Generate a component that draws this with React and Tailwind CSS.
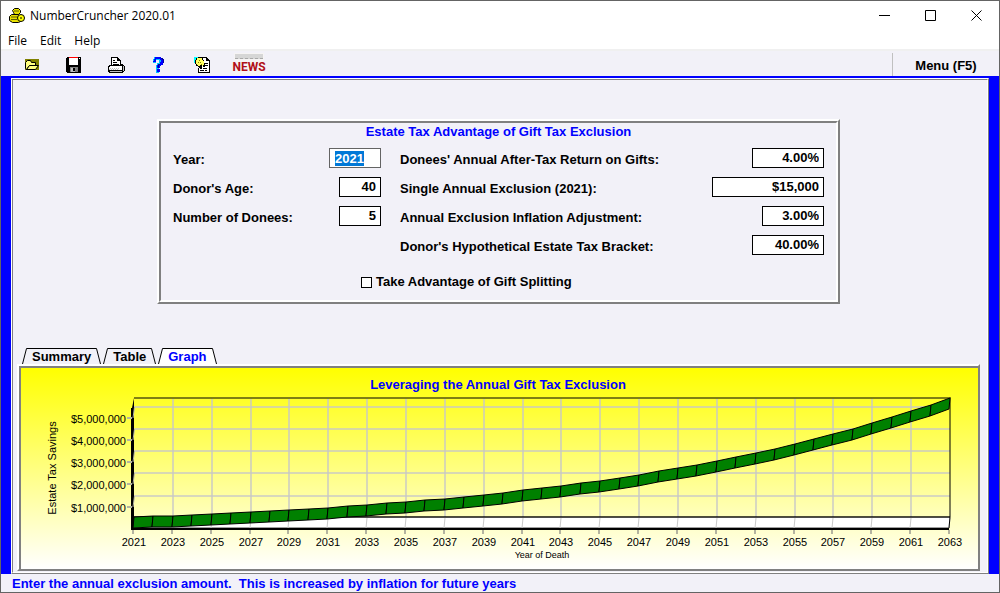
import React, { useEffect, useRef, useState } from 'react';

const FIRST_YEAR = 2021;

// top edge of the savings ribbon, one y per year
const RIBBON = [
    517, 516, 516, 515, 514, 513, 512, 511, 510, 509, 508, 506, 505, 503, 502,
    500, 499, 497, 495, 493, 490, 488, 486, 483, 481, 478, 475, 471, 468, 465,
    461, 457, 453, 449, 444, 439, 434, 429, 423, 417, 411, 405, 398,
];

const Y_TICKS = [
    { label: '$5,000,000', y: 418 },
    { label: '$4,000,000', y: 440 },
    { label: '$3,000,000', y: 462 },
    { label: '$2,000,000', y: 484 },
    { label: '$1,000,000', y: 507 },
];

const LEFT = 134;
const RIGHT = 950;
const DEPTH = 11;

const xAt = (i) => Math.round(LEFT + (i * (RIGHT - LEFT)) / (RIBBON.length - 1));

function AppIcon() {
    return (
        <svg className="w-4 h-4" viewBox="0 0 16 16" aria-hidden="true">
            <path fill="#e8e000" stroke="#000" d="M4.5 4.5L3.5 2.5L5.5 0.5H9.5L11.5 2.5V4.5L9.5 6.5H5.5z" />
            <path fill="#e8e000" stroke="#000" d="M0.5 8.5L2.5 6.5H9.5L11.5 8.5V13.5L9.5 14.5H3.5L0.5 12.5z" />
            <path fill="none" stroke="#606000" d="M5 3H10M2 9H9M2 11.5H8" />
            <circle cx="12" cy="10" r="3.5" fill="#ffff00" stroke="#000" />
            <path fill="#808000" d="M11 9h2v2h-2z" />
        </svg>
    );
}

function OpenIcon() {
    return (
        <svg className="w-[14px] h-[11px]" viewBox="0 0 14 11" aria-hidden="true">
            <path fill="#808000" d="M0 0h14v11H0z" />
            <path fill="#ffff80" stroke="#000" d="M0.5 9.5V3.5L2.5 1.5H5.5L6.5 3.5H10.5V6.5H4.5L1.5 10.5z" />
            <path fill="#ffff80" stroke="#000" d="M1.5 10.5L4.5 6.5H13.5L10.5 10.5z" />
        </svg>
    );
}

function SaveIcon() {
    return (
        <svg className="w-4 h-4" viewBox="0 0 16 16" shapeRendering="crispEdges" aria-hidden="true">
            <path fill="#000" d="M1 0h14v16H1v-1H0V1h1z" />
            <path fill="#fff" d="M3 1h9v7H3z" />
            <path fill="#ff0000" d="M3 0h9v1H3z" />
            <path fill="#808080" d="M4 10h8v5H4z" />
            <path fill="#c0c0c0" d="M5 11h4v4H5z" />
            <path fill="#000" d="M7 11h2v3H7z" />
            <path fill="#fff" d="M13 1h1v1h-1z" />
        </svg>
    );
}

function PrintIcon() {
    return (
        <svg className="w-[17px] h-4" viewBox="0 0 17 16" shapeRendering="crispEdges" aria-hidden="true">
            <path fill="#000" d="M3 0h7v1h1v1h1v1h1v4h2v1h1v1h1v5h-1v1h-1v1H1v-1H0V9h1V8h2z" />
            <path fill="#fff" d="M4 1h5v3h3v4H4zM2 9h12v1H2zM1 10h13v3H1z" />
            <path fill="#000" d="M5 3h2v1H5zM5 5h4v1H5zM5 7h6v1H5z" />
            <path fill="#c0c0c0" d="M2 11h1v1H2zM4 11h1v1H4zM6 11h1v1H6zM8 11h1v1H8zM10 11h1v1h-1zM1 12h1v1H1zM3 12h1v1H3zM5 12h1v1H5zM7 12h1v1H7zM9 12h1v1H9zM15 9h1v5h-1zM2 14h12v1H2z" />
        </svg>
    );
}

function HelpIcon() {
    return (
        <svg className="w-3 h-4" viewBox="0 0 12 16" shapeRendering="crispEdges" aria-hidden="true">
            <path fill="#00c0ff" d="M2 0h7v1h1v1h1v5h-1v1H9v1H7v3H4V8h1V6h2V3H4v3H1V2h1zM4 12h3v4H4z" />
            <path fill="#0000ff" d="M3 0h6v1h2v1h1v4h-1v2H9v1H8v2H5V8h1V7h2V5h1V3H8V2H4v3H1V4h1V2h1zM5 12h3v3H5z" />
            <path fill="#0000a0" d="M9 1h2v1h1v4h-1V3h-1V2H9zM6 7h2v1H7v3H6z" />
        </svg>
    );
}

function NotesIcon() {
    return (
        <svg className="w-4 h-4" viewBox="0 0 16 16" shapeRendering="crispEdges" aria-hidden="true">
            <path fill="#000" d="M8 0h5v1h1v1h1v1h1v13H4v-5h1V2h3z" />
            <path fill="#fff" d="M9 1h3v3h3v11H5v-4h3V4h1z" />
            <path fill="#000" d="M11 6h3v1h-3zM10 8h4v1h-4zM6 11h2v1H6zM9 11h4v1H9zM6 13h4v1H6zM11 13h2v1h-2zM12 3h1v1h-1z" />
            <path fill="#00ffff" d="M0 0h4v1H3v1H2v2H1v2H0z" />
            <path fill="#000" d="M4 0h4v1h1v2h1v3h1v4H9V9H7v1H4V9H2V7H1V3h1V1h2z" />
            <path fill="#ffff60" d="M3 1h5v2h1v1h1v4H9v1H8V8H6v1H4V8H3V7H2V3h1z" />
            <path fill="#808000" d="M5 3h1v1H5zM4 5h1v1H4zM6 5h1v1H6zM7 7h1v1H7z" />
        </svg>
    );
}

function NewsIcon() {
    return (
        <span className="flex w-[30px] h-[23px] flex-col items-center bg-[#f6f4f4]">
            <span className="w-[28px] mt-px h-[5px] shrink-0 bg-[#d6d6d6] border-b border-dashed border-[#a8a8a8]" />
            <span className="font-[Roboto,sans-serif] font-bold text-[12px] leading-[17px] text-[#b01018]">NEWS</span>
        </span>
    );
}

function ToolButton({ label, children, className = 'w-[42px]' }) {
    return (
        <button type="button" aria-label={label} className={`flex h-full items-center justify-center ${className}`}>
            {children}
        </button>
    );
}

function WindowButton({ label, children }) {
    return (
        <button type="button" aria-label={label} className="flex w-[46px] h-full items-center justify-center hover:bg-gray-200">
            <svg className="w-[11px] h-[11px]" viewBox="0 0 11 11" fill="none" stroke="#000" aria-hidden="true">
                {children}
            </svg>
        </button>
    );
}

// Raised outer edge with a sunken inner one
function BevelPanel({ className = '', innerClassName = '', children }) {
    return (
        <div className={`border-2 border-t-white border-l-white border-b-[#808080] border-r-[#808080] ${className}`}>
            <div className={`border-t-2 border-l-2 border-t-[#808080] border-l-[#808080] ${innerClassName}`}>{children}</div>
        </div>
    );
}

function Field({ id, label, defaultValue, width }) {
    return (
        <div className="flex h-5 items-center justify-between">
            <label htmlFor={id} className="pt-1">{label}</label>
            <input
                id={id}
                type="text"
                defaultValue={defaultValue}
                className={`h-5 border border-black bg-white pr-1 pb-px text-right leading-4 outline-none ${width}`}
            />
        </div>
    );
}

function YearField() {
    const ref = useRef(null);

    useEffect(() => {
        ref.current.focus();
        ref.current.select();
    }, []);

    return (
        <div className="flex h-5 items-center justify-between">
            <label htmlFor="year" className="pt-1">Year:</label>
            <input
                id="year"
                ref={ref}
                type="text"
                defaultValue="2021"
                className="h-5 w-[52px] border border-[#646464] bg-white pl-[5px] leading-4 outline-none selection:bg-[#0078d7] selection:text-white"
            />
        </div>
    );
}

function Tab({ name, active, onSelect }) {
    return (
        <button type="button" role="tab" aria-selected={active} onClick={() => onSelect(name)} className="flex h-4">
            <svg className="w-[5px] h-4" viewBox="0 0 5 16" aria-hidden="true">
                <path d="M0.5 16L4.5 0.5H5V16z" fill={active ? '#fff' : '#f2f1f8'} />
                <path d="M0.5 16L4.5 0.5H5" fill="none" stroke="#000" />
            </svg>
            <span className={`h-4 border-t border-black px-[5px] leading-[16px] ${active ? 'bg-white text-[#0000ff]' : ''}`}>{name}</span>
            <svg className="w-[5px] h-4" viewBox="0 0 5 16" aria-hidden="true">
                <path d="M4.5 16L0.5 0.5H0V16z" fill={active ? '#fff' : '#f2f1f8'} />
                <path d="M4.5 16L0.5 0.5H0" fill="none" stroke="#000" />
            </svg>
        </button>
    );
}

function SavingsChart() {
    const oddYears = RIBBON.map((_, i) => i).filter((i) => i % 2 === 0);

    return (
        <svg className="block w-full" viewBox="21 368 957 201" role="img" aria-label="Estate tax savings by year of death">
            {/* back wall grid */}
            <g stroke="#c8c8c8" strokeWidth="2" strokeOpacity="0.7">
                {Y_TICKS.map((t) => (
                    <path key={t.y} d={`M${LEFT} ${t.y - DEPTH}H${RIGHT}`} />
                ))}
                {oddYears.slice(1, -1).map((i) => (
                    <path key={i} d={`M${xAt(i)} 399V517`} />
                ))}
            </g>
            <path d="M134 398H950V517" fill="none" stroke="#000" strokeOpacity="0.5" strokeWidth="2" />

            {/* floor */}
            <path d="M134 517H950L949 528H133z" fill="#fff" />
            <path d="M134 517H950" stroke="#000" strokeOpacity="0.7" strokeWidth="2" />
            <path d="M133 527.5H949" stroke="#a0a0a0" />
            {oddYears.map((i) => (
                <path key={i} d={`M${xAt(i)} 518L${xAt(i) - 1} 528`} stroke="#c8c8c8" />
            ))}
            <path d="M950 517L949 528" stroke="#000" />

            {/* left wall and axis lines */}
            <path d="M132 408L134 398V517L133 529H131z" fill="#000" />
            <path d="M132.5 408V529" stroke="#000" strokeWidth="3" />
            <path d="M131 529H949" stroke="#000" strokeWidth="2" />
            {Y_TICKS.map((t) => (
                <g key={t.y} stroke="#b4b4a0">
                    <path d={`M127 ${t.y}H132`} strokeWidth="2" />
                    <path d={`M133 ${t.y}L134.5 ${t.y - DEPTH}`} />
                </g>
            ))}
            {oddYears.map((i) => (
                <path key={i} d={`M${xAt(i) - 1} 530V534`} stroke="#b4b4a0" strokeWidth="2" />
            ))}

            {/* ribbon */}
            {RIBBON.slice(0, -1).map((y, i) => {
                const next = RIBBON[i + 1];
                return (
                    <path
                        key={i}
                        d={`M${xAt(i)} ${y}L${xAt(i + 1)} ${next}L${xAt(i + 1) - 1} ${next + DEPTH}L${xAt(i) - 1} ${y + DEPTH}z`}
                        fill="#008000"
                        stroke="#000"
                        strokeLinejoin="round"
                    />
                );
            })}

            <g fontSize="11" fontWeight="normal" fill="#000">
                {Y_TICKS.map((t) => (
                    <text key={t.y} x="126" y={t.y + 5} textAnchor="end">{t.label}</text>
                ))}
                {oddYears.map((i) => (
                    <text key={i} x={xAt(i)} y="546" textAnchor="middle">{FIRST_YEAR + i}</text>
                ))}
                <text x="542" y="558" textAnchor="middle" fontSize="9">Year of Death</text>
                <text transform="translate(56 468) rotate(-90)" textAnchor="middle">Estate Tax Savings</text>
            </g>
            <text x="498" y="389" textAnchor="middle" fontSize="13" fontWeight="bold" fill="#0000ff">
                Leveraging the Annual Gift Tax Exclusion
            </text>
        </svg>
    );
}

export default function App() {
    const [tab, setTab] = useState('Graph');

    return (
        <div className="flex min-h-screen flex-col border border-[#646464] bg-[#f2f1f8] font-['Liberation_Sans',Arial,sans-serif] text-[13px] leading-4 font-bold text-black">
            <header className="bg-white font-['Open_Sans','Noto_Sans',sans-serif] text-[12px] font-normal">
                <div className="flex h-[29px] items-center pl-2">
                    <AppIcon />
                    <h1 className="ml-[5px] flex-1">NumberCruncher 2020.01</h1>
                    <div className="flex h-full">
                        <WindowButton label="Minimize"><path d="M0 5.5H11" /></WindowButton>
                        <WindowButton label="Maximize"><path d="M0.5 0.5H10.5V10.5H0.5z" /></WindowButton>
                        <WindowButton label="Close"><path d="M0.5 0.5L10.5 10.5M10.5 0.5L0.5 10.5" /></WindowButton>
                    </div>
                </div>
                <nav className="flex h-[19px] items-center gap-[13px] pt-[2px] pl-[7px]">
                    <button type="button">File</button>
                    <button type="button">Edit</button>
                    <button type="button">Help</button>
                </nav>
            </header>

            <div className="flex h-[29px] items-center border-t-2 border-b-2 border-t-[#f0f0f0] border-b-[#0000ff] pt-[2px] pl-[10px]">
                <ToolButton label="Open"><OpenIcon /></ToolButton>
                <ToolButton label="Save"><SaveIcon /></ToolButton>
                <ToolButton label="Print"><PrintIcon /></ToolButton>
                <ToolButton label="Help"><HelpIcon /></ToolButton>
                <ToolButton label="Notes" className="w-[46px]"><NotesIcon /></ToolButton>
                <ToolButton label="News" className="w-[48px]"><NewsIcon /></ToolButton>
                <button type="button" className="ml-auto h-[23px] w-[107px] self-end border-l border-[#c0c0c0] pt-[2px]">Menu (F5)</button>
            </div>

            <main className="flex flex-1 flex-col border-x-[10px] border-[#0000ff]">
                <div className="flex flex-1 flex-col border border-t-white border-l-white border-b-[#808080] border-r-[#808080]">
                    <div className="flex flex-1 flex-col border border-t-[#808080] border-l-[#808080] border-b-white border-r-white pt-[39px] pr-[7px] pl-1">
                        <BevelPanel className="mx-auto w-full max-w-[683px]" innerClassName="border-b-2 border-r-2 border-b-white border-r-white pt-px pb-[10px]">
                            <h2 className="text-center text-[#0000ff]">Estate Tax Advantage of Gift Tax Exclusion</h2>
                            <form className="mt-2 px-3" onSubmit={(e) => e.preventDefault()}>
                                <div className="flex gap-[19px]">
                                    <div className="flex w-[208px] flex-col gap-[9px]">
                                        <YearField />
                                        <Field id="age" label="Donor's Age:" defaultValue="40" width="w-[42px]" />
                                        <Field id="donees" label="Number of Donees:" defaultValue="5" width="w-[42px]" />
                                    </div>
                                    <div className="flex flex-1 flex-col gap-[9px]">
                                        <Field id="return" label="Donees' Annual After-Tax Return on Gifts:" defaultValue="4.00%" width="w-[72px]" />
                                        <Field id="exclusion" label="Single Annual Exclusion (2021):" defaultValue="$15,000" width="w-[112px]" />
                                        <Field id="inflation" label="Annual Exclusion Inflation Adjustment:" defaultValue="3.00%" width="w-[62px]" />
                                        <Field id="bracket" label="Donor's Hypothetical Estate Tax Bracket:" defaultValue="40.00%" width="w-[72px]" />
                                    </div>
                                </div>
                                <div className="mt-[19px] ml-[188px] flex items-center gap-1">
                                    <input id="splitting" type="checkbox" className="size-[11px] appearance-none border border-black bg-white checked:bg-black" />
                                    <label htmlFor="splitting">Take Advantage of Gift Splitting</label>
                                </div>
                            </form>
                        </BevelPanel>

                        <div role="tablist" className="mt-[44px] ml-[5px] flex gap-[2px]">
                            {['Summary', 'Table', 'Graph'].map((name) => (
                                <Tab key={name} name={name} active={tab === name} onSelect={setTab} />
                            ))}
                        </div>
                        <BevelPanel innerClassName="bg-linear-to-b/srgb from-[#ffff00] to-white">
                            <SavingsChart />
                        </BevelPanel>
                    </div>
                </div>
            </main>

            <footer className="h-[18px] pl-[11px] whitespace-pre text-[#0000ff] leading-[20px]">
                Enter the annual exclusion amount.  This is increased by inflation for future years
            </footer>
        </div>
    );
}
